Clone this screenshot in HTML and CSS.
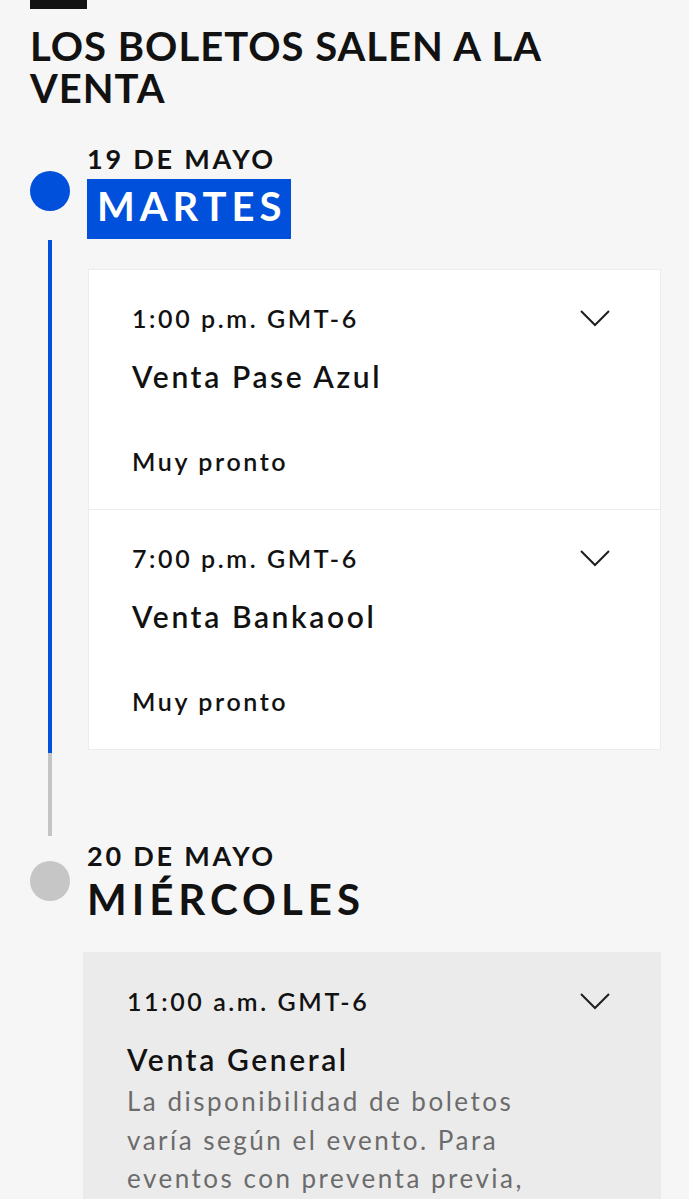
FILE: index.html
```html
<!DOCTYPE html>
<html lang="es">
<head>
  <meta charset="UTF-8">
  <title>Los boletos salen a la venta</title>
  <link rel="stylesheet" href="styles.css">
</head>
<body>

  <div class="page">
    <div class="top-bar"></div>
    <h1 class="section-title">LOS BOLETOS SALEN A LA VENTA</h1>

    <!-- dia 1 -->
    <div class="day first">
      <div class="day-head">
        <span class="dot active"></span>
        <div class="day-title">
          <div class="day-date">19 DE MAYO</div>
          <div class="day-name highlight">MARTES</div>
        </div>
      </div>
      <div class="day-body">
        <div class="rail"></div>
        <div class="slots">
          <div class="slot">
            <div class="slot-top">
              <span class="slot-time">1:00 p.m. GMT-6</span>
              <svg class="chevron" width="30" height="17" viewBox="0 0 30 17"><polyline points="1,1 15,15 29,1" fill="none" stroke="#1f1f1f" stroke-width="2"/></svg>
            </div>
            <div class="slot-name">Venta Pase Azul</div>
            <div class="slot-status">Muy pronto</div>
          </div>
          <div class="slot">
            <div class="slot-top">
              <span class="slot-time">7:00 p.m. GMT-6</span>
              <svg class="chevron" width="30" height="17" viewBox="0 0 30 17"><polyline points="1,1 15,15 29,1" fill="none" stroke="#1f1f1f" stroke-width="2"/></svg>
            </div>
            <div class="slot-name">Venta Bankaool</div>
            <div class="slot-status">Muy pronto</div>
          </div>
        </div>
      </div>
    </div>

    <!-- dia 2 -->
    <div class="day last">
      <div class="day-head">
        <span class="dot"></span>
        <div class="day-title">
          <div class="day-date">20 DE MAYO</div>
          <div class="day-name">MIÉRCOLES</div>
        </div>
      </div>
      <div class="day-body">
        <div class="slots">
          <div class="slot general">
            <div class="slot-top">
              <span class="slot-time">11:00 a.m. GMT-6</span>
              <svg class="chevron" width="30" height="17" viewBox="0 0 30 17"><polyline points="1,1 15,15 29,1" fill="none" stroke="#1f1f1f" stroke-width="2"/></svg>
            </div>
            <div class="slot-name">Venta General</div>
            <p class="slot-desc">La disponibilidad de boletos varía según el evento. Para eventos con preventa previa, los boletos pueden estar limitados.</p>
          </div>
        </div>
      </div>
    </div>
  </div>

</body>
</html>
```

FILE: styles.css
```css
body {
  font-family: "Lato", "Liberation Sans", sans-serif;
  background-color: #f6f6f6;
  color: #121212;
  margin: 0;
  padding: 0;
  overflow: hidden;
}

.page {
  padding: 0 28px 0 30px;
}

.top-bar {
  width: 57px;
  height: 9px;
  background-color: #121212;
}

.section-title {
  margin: 16px 0 0;
  font-size: 40px;
  line-height: 42px;
  font-weight: 700;
  letter-spacing: 1px;
}

/* timeline */
.day.first {
  margin-top: 33px;
}

.day-head {
  display: flex;
  align-items: center;
  gap: 17px;
}

.dot {
  flex: none;
  width: 40px;
  height: 40px;
  border-radius: 50%;
  background-color: #c6c6c6;
}

.dot.active {
  background-color: #0050dc;
}

.day-date {
  font-size: 27px;
  line-height: 34px;
  font-weight: 700;
  letter-spacing: 2.8px;
}

.day-name {
  margin-top: 3px;
  font-size: 42px;
  line-height: 46px;
  font-weight: 700;
  letter-spacing: 5px;
}

.day-name.highlight {
  display: inline-block;
  padding: 0 5px 6px 10px;
  font-size: 40px;
  line-height: 54px;
  background-color: #0050dc;
  color: #fff;
}

.day-body {
  display: flex;
}

.rail {
  flex: none;
  width: 4px;
  margin: 1px 36px 3px 18px;
  background: linear-gradient(to bottom, #0050dc calc(100% - 83px), #c4c4c4 calc(100% - 83px));
}

.slots {
  flex: 1;
  margin-top: 30px;
  padding-bottom: 89px;
}

.day.last .slots {
  margin-left: 53px;
  padding-bottom: 0;
}

.slot {
  background-color: #fff;
  border: 1px solid #ececec;
  padding: 33px 50px 33px 43px;
}

.slot + .slot {
  border-top: none;
}

.slot-top {
  display: flex;
  justify-content: space-between;
  align-items: center;
}

.slot-time {
  font-size: 25px;
  line-height: 30px;
  font-weight: 600;
  letter-spacing: 2.6px;
}

.slot-name {
  margin-top: 25px;
  font-size: 30px;
  line-height: 36px;
  font-weight: 600;
  letter-spacing: 2.6px;
}

.slot-status {
  margin-top: 52px;
  font-size: 25px;
  line-height: 30px;
  font-weight: 600;
  letter-spacing: 2.6px;
}

.slot.general {
  background-color: #ebebeb;
  border-color: #ebebeb;
}

.slot-desc {
  max-width: 420px;
  margin: 5px 0 0;
  font-size: 26px;
  line-height: 38.5px;
  letter-spacing: 2.5px;
  color: #6b6b6b;
}
```
